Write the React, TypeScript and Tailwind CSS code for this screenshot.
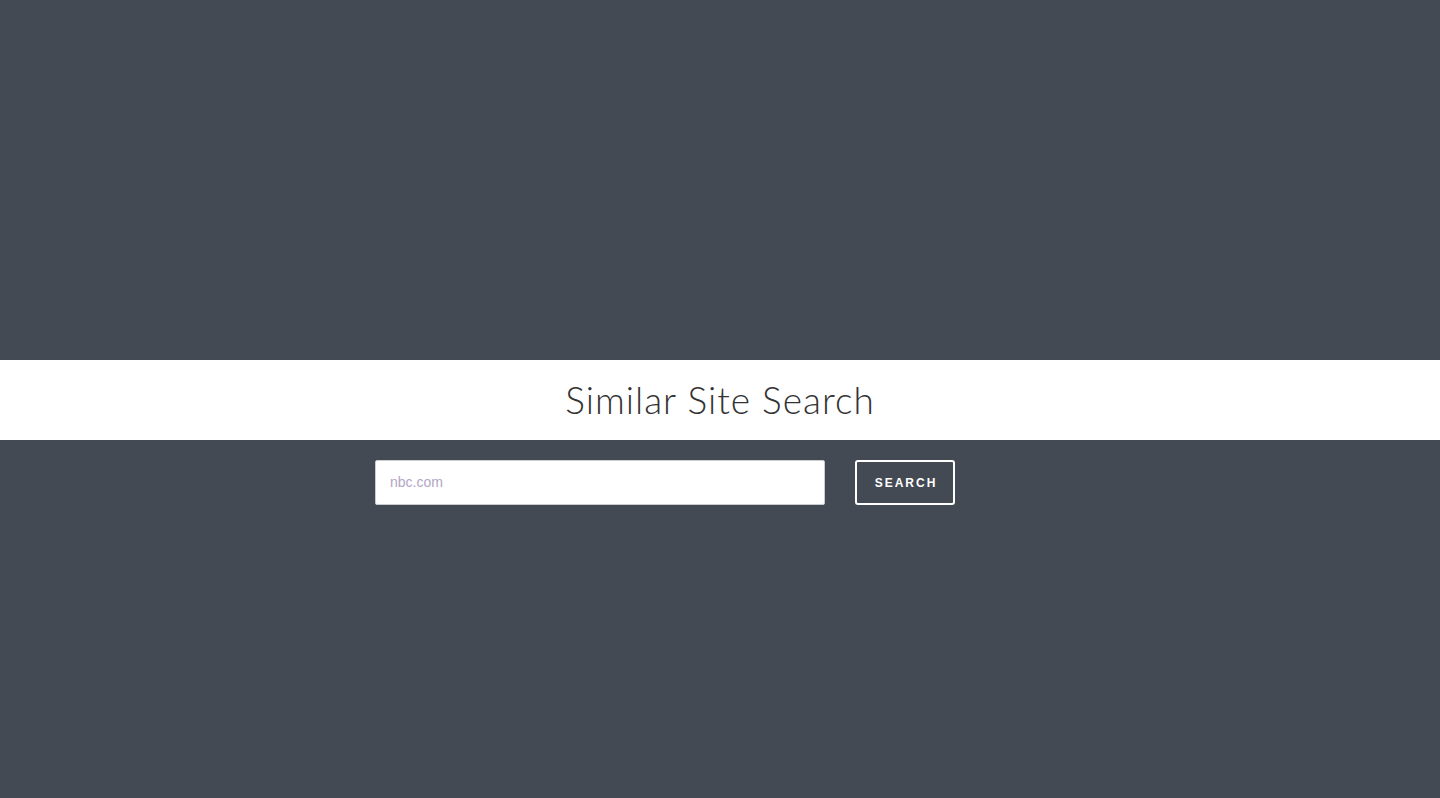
export default function App() {
  return (
    <main className="flex h-[798px] w-full flex-col bg-[#434a54] pt-[360px] font-['Liberation_Sans',Arial,sans-serif]">
      <div className="flex h-20 items-center justify-center bg-white">
        <h1 className="font-['Lato',sans-serif] text-[37px] font-light tracking-[1px] text-[#333]">
          Similar Site Search
        </h1>
      </div>
      <form
        className="mx-auto mt-5 flex w-[690px] gap-[30px]"
        onSubmit={(e) => e.preventDefault()}
      >
        <input
          type="text"
          placeholder="nbc.com"
          className="h-[45px] w-[450px] rounded-[2px] border border-[#ccc] bg-white px-[14px] pb-[2px] text-[14px] text-[#555] outline-none placeholder:text-[#b3a5c6]"
        />
        <button
          type="submit"
          className="h-[45px] w-[100px] rounded-[3px] border-2 border-white pl-[2px] text-[12px] font-bold tracking-[2px] text-white"
        >
          SEARCH
        </button>
      </form>
    </main>
  );
}
